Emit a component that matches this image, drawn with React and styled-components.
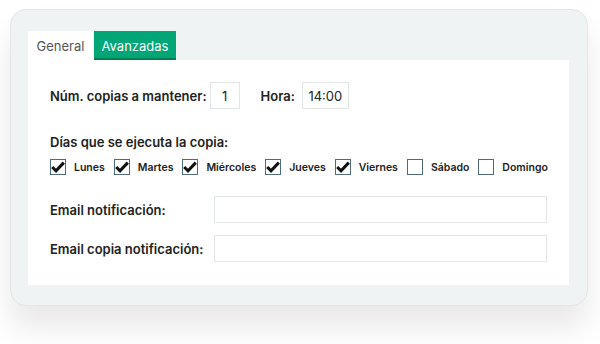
import React from 'react';
import styled, { createGlobalStyle } from 'styled-components';

const Global = createGlobalStyle`
  body {
    margin: 0;
    background: #fff;
    font-family: "Inter", "Liberation Sans", sans-serif;
  }
`;

const Frame = styled.div`
  width: 600px;
  height: 344px;
  padding: 9px 0 0 10px;
  box-sizing: border-box;
`;

const Card = styled.div`
  width: 578px;
  height: 297px;
  box-sizing: border-box;
  background: #f0f3f4;
  border: 1px solid #e2e6e8;
  border-radius: 16px;
  padding: 21px 18px 0 17px;
  box-shadow: 0 22px 30px rgba(0, 0, 0, 0.09);
`;

const Tabs = styled.div`
  display: flex;
  gap: 1px;
  height: 29px;
`;

const Tab = styled.div`
  display: flex;
  align-items: center;
  width: ${p => p.width};
  justify-content: center;
  font-size: 13px;
  box-sizing: border-box;
  background: ${p => (p.active ? '#00a676' : '#fff')};
  color: ${p => (p.active ? '#fff' : '#555')};
  border-bottom: 2px solid ${p => (p.active ? '#00804f' : '#fff')};
  padding-top: 2px;
`;

const Panel = styled.div`
  background: #fff;
  height: 225px;
  box-sizing: border-box;
  padding: 22px 22px 0 22px;
  display: flex;
  flex-direction: column;
`;

const Row = styled.div`
  display: flex;
  align-items: center;
`;

const Label = styled.span`
  font-size: 13px;
  font-weight: 600;
  color: #222;
  width: ${p => p.width || 'auto'};
  margin-right: ${p => p.mr || '0'};
`;

const Box = styled.div`
  height: 27px;
  width: ${p => p.width};
  box-sizing: border-box;
  border: 1px solid #e1e5e8;
  display: flex;
  align-items: center;
  justify-content: center;
  font-size: 13px;
  color: #222;
  margin-right: ${p => p.mr || '0'};
`;

const Section = styled.div`
  margin-top: ${p => p.mt};
`;

const Days = styled.div`
  display: flex;
  align-items: center;
  justify-content: space-between;
  width: 498px;
  margin-top: 8px;
`;

const Day = styled.div`
  display: flex;
  align-items: center;
  gap: 8px;
  font-size: 10.5px;
  font-weight: 600;
  color: #222;
`;

const Check = styled.span`
  width: 16px;
  height: 16px;
  box-sizing: border-box;
  border: 1.5px solid #4e6a7c;
  display: flex;
  align-items: center;
  justify-content: center;
`;

const Fields = styled.div`
  margin-top: 21px;
  display: flex;
  flex-direction: column;
  gap: 12px;
`;

const days = [
  ['Lunes', true],
  ['Martes', true],
  ['Miércoles', true],
  ['Jueves', true],
  ['Viernes', true],
  ['Sábado', false],
  ['Domingo', false],
];

function Tick() {
  return (
    <svg width="14" height="12" viewBox="0 0 14 12">
      <path d="M1.2 6 L5 9.8 L12.8 1.6" fill="none" stroke="#111" strokeWidth="3" />
    </svg>
  );
}

export default function App() {
  return (
    <>
      <Global />
      <Frame>
        <Card>
          <Tabs>
            <Tab width="65px">General</Tab>
            <Tab width="82px" active>Avanzadas</Tab>
          </Tabs>
          <Panel>
            <Row>
              <Label mr="3px">Núm. copias a mantener:</Label>
              <Box width="30px" mr="21px">1</Box>
              <Label mr="7px">Hora:</Label>
              <Box width="47px">14:00</Box>
            </Row>
            <Section mt="22px">
              <Label>Días que se ejecuta la copia:</Label>
              <Days>
                {days.map(([d, on]) => (
                  <Day key={d}>
                    <Check>{on && <Tick />}</Check>
                    {d}
                  </Day>
                ))}
              </Days>
            </Section>
            <Fields>
              <Row>
                <Label width="164px">Email notificación:</Label>
                <Box width="333px" />
              </Row>
              <Row>
                <Label width="164px">Email copia notificación:</Label>
                <Box width="333px" />
              </Row>
            </Fields>
          </Panel>
        </Card>
      </Frame>
    </>
  );
}
